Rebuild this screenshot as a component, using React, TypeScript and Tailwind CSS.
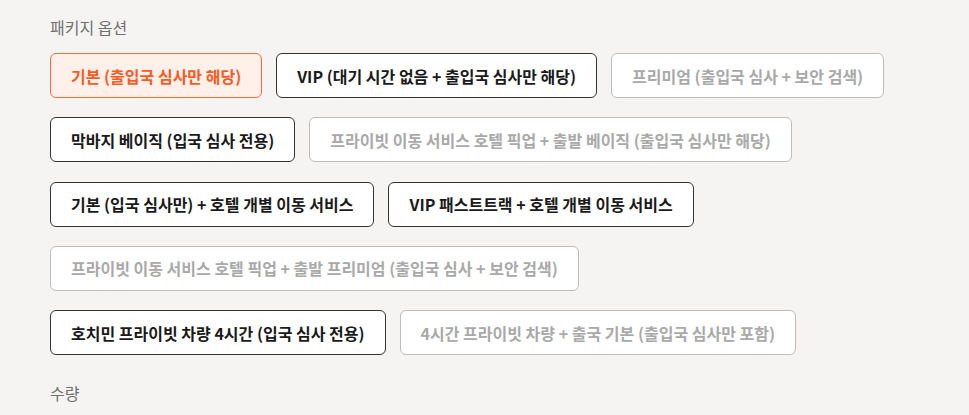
import React from "react";

type Opt = { label: string; state: "selected" | "normal" | "disabled" };

const options: Opt[] = [
  { label: "기본 (출입국 심사만 해당)", state: "selected" },
  { label: "VIP (대기 시간 없음 + 출입국 심사만 해당)", state: "normal" },
  { label: "프리미엄 (출입국 심사 + 보안 검색)", state: "disabled" },
  { label: "막바지 베이직 (입국 심사 전용)", state: "normal" },
  { label: "프라이빗 이동 서비스 호텔 픽업 + 출발 베이직 (출입국 심사만 해당)", state: "disabled" },
  { label: "기본 (입국 심사만) + 호텔 개별 이동 서비스", state: "normal" },
  { label: "VIP 패스트트랙 + 호텔 개별 이동 서비스", state: "normal" },
  { label: "프라이빗 이동 서비스 호텔 픽업 + 출발 프리미엄 (출입국 심사 + 보안 검색)", state: "disabled" },
  { label: "호치민 프라이빗 차량 4시간 (입국 심사 전용)", state: "normal" },
  { label: "4시간 프라이빗 차량 + 출국 기본 (출입국 심사만 포함)", state: "disabled" },
];

const stateCls: Record<Opt["state"], string> = {
  selected: "border-[#ff6a3d] bg-[#fff0ea] text-[#ff5a1f]",
  normal: "border-[#333333] bg-white text-[#1a1a1a]",
  disabled: "border-[#bdbdbd] bg-white text-[#a9a9a9]",
};

export default function App() {
  return (
    <div
      className="min-h-[415px] w-full bg-[#f5f4f3] px-[50px] pt-[16px]"
      style={{ fontFamily: '"Noto Sans CJK KR", "Noto Sans", sans-serif' }}
    >
      <div className="text-[16px] leading-[22px] text-[#707070]">패키지 옵션</div>
      <div className="mt-[15px] flex w-[850px] flex-wrap gap-x-[14px] gap-y-[19.25px]">
        {options.map((o) => (
          <button
            key={o.label}
            className={`flex h-[45px] items-center rounded-[6px] border px-[20px] text-[16px] font-bold ${stateCls[o.state]}`}
          >
            {o.label}
          </button>
        ))}
      </div>
      <div className="mt-[27px] text-[16px] leading-[22px] text-[#707070]">수량</div>
    </div>
  );
}
